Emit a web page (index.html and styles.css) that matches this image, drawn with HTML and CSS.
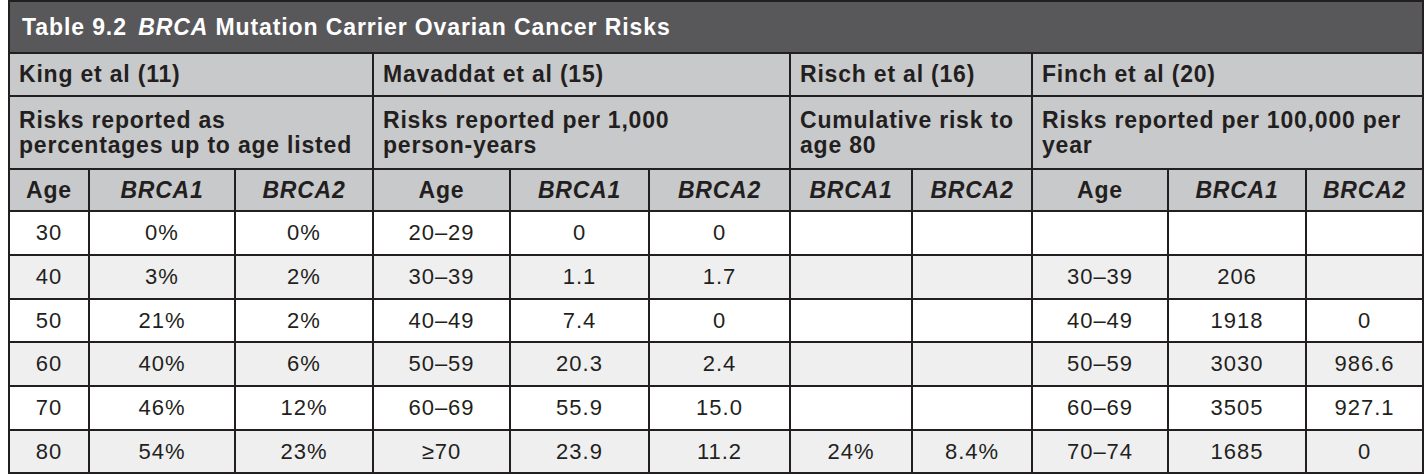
FILE: index.html
```html
<!DOCTYPE html>
<html lang="en">
<head>
<meta charset="utf-8">
<title>Table 9.2 BRCA Mutation Carrier Ovarian Cancer Risks</title>
<link rel="stylesheet" href="styles.css">
</head>
<body>
<table class="risk-table">
  <colgroup>
    <col class="c1"><col class="c2"><col class="c3">
    <col class="c4"><col class="c5"><col class="c6">
    <col class="c7"><col class="c8">
    <col class="c9"><col class="c10"><col class="c11">
  </colgroup>
  <thead>
    <tr class="title-row">
      <th colspan="11" class="title">Table 9.2 <em class="title-gene">BRCA</em> Mutation Carrier Ovarian Cancer Risks</th>
    </tr>
    <tr class="study-row">
      <th colspan="3" class="study">King et al (11)</th>
      <th colspan="3" class="study">Mavaddat et al (15)</th>
      <th colspan="2" class="study">Risch et al (16)</th>
      <th colspan="3" class="study">Finch et al (20)</th>
    </tr>
    <tr class="desc-row">
      <th colspan="3" class="desc">Risks reported as<br>percentages up to age listed</th>
      <th colspan="3" class="desc">Risks reported per 1,000<br>person-years</th>
      <th colspan="2" class="desc">Cumulative risk to<br>age 80</th>
      <th colspan="3" class="desc">Risks reported per 100,000 per<br>year</th>
    </tr>
    <tr class="col-row">
      <th>Age</th><th><em>BRCA1</em></th><th><em>BRCA2</em></th>
      <th>Age</th><th><em>BRCA1</em></th><th><em>BRCA2</em></th>
      <th><em>BRCA1</em></th><th><em>BRCA2</em></th>
      <th>Age</th><th><em>BRCA1</em></th><th><em>BRCA2</em></th>
    </tr>
  </thead>
  <tbody>
    <tr class="r-a">
      <td>30</td><td>0%</td><td>0%</td>
      <td>20–29</td><td>0</td><td>0</td>
      <td></td><td></td>
      <td></td><td></td><td></td>
    </tr>
    <tr class="r-b">
      <td>40</td><td>3%</td><td>2%</td>
      <td>30–39</td><td>1.1</td><td>1.7</td>
      <td></td><td></td>
      <td>30–39</td><td>206</td><td></td>
    </tr>
    <tr class="r-a r-short">
      <td>50</td><td>21%</td><td>2%</td>
      <td>40–49</td><td>7.4</td><td>0</td>
      <td></td><td></td>
      <td>40–49</td><td>1918</td><td>0</td>
    </tr>
    <tr class="r-b">
      <td>60</td><td>40%</td><td>6%</td>
      <td>50–59</td><td>20.3</td><td>2.4</td>
      <td></td><td></td>
      <td>50–59</td><td>3030</td><td>986.6</td>
    </tr>
    <tr class="r-a">
      <td>70</td><td>46%</td><td>12%</td>
      <td>60–69</td><td>55.9</td><td>15.0</td>
      <td></td><td></td>
      <td>60–69</td><td>3505</td><td>927.1</td>
    </tr>
    <tr class="r-b r-short">
      <td>80</td><td>54%</td><td>23%</td>
      <td>≥70</td><td>23.9</td><td>11.2</td>
      <td>24%</td><td>8.4%</td>
      <td>70–74</td><td>1685</td><td>0</td>
    </tr>
  </tbody>
</table>
</body>
</html>
```

FILE: styles.css
```css
html, body {
  background: #ffffff;
}
body {
  margin: 0 0 0 8px;
  font-family: "Liberation Sans", Arial, Helvetica, sans-serif;
  color: #231f20;
}

.risk-table {
  box-sizing: border-box;
  width: 1416px;
  table-layout: fixed;
  border-collapse: separate;
  border-spacing: 0;
  border-top: 2px solid #231f20;
  border-left: 2px solid #231f20;
}

.c1 { width: 80px; }
.c2 { width: 146px; }
.c3 { width: 138px; }
.c4 { width: 137px; }
.c5 { width: 139px; }
.c6 { width: 141px; }
.c7 { width: 122px; }
.c8 { width: 120px; }
.c9 { width: 136px; }
.c10 { width: 138px; }
.c11 { width: 117px; }

.risk-table th,
.risk-table td {
  box-sizing: border-box;
  border-right: 2px solid #231f20;
  border-bottom: 2px solid #231f20;
  padding: 0 9px;
  vertical-align: middle;
  white-space: nowrap;
}

.risk-table em {
  font-style: italic;
}

.title-row th {
  background: #58585a;
  color: #ffffff;
  font-size: 23px;
  letter-spacing: 0.9px;
  font-weight: 700;
  text-align: left;
  height: 52px;
  padding-left: 12px;
}

.title-gene {
  margin-left: 4px;
}

.study-row th,
.desc-row th,
.col-row th {
  background: #c8c9cb;
  font-size: 23px;
  letter-spacing: 0.8px;
  font-weight: 700;
  color: #231f20;
}

.study-row th {
  text-align: left;
  height: 43px;
}

.desc-row th {
  text-align: left;
  line-height: 25px;
  height: 73px;
}

.col-row th {
  text-align: center;
  height: 42px;
}

.risk-table td {
  font-size: 22px;
  letter-spacing: 1px;
  text-align: center;
  height: 44px;
}

.r-short td {
  height: 43px;
}

.r-a td {
  background: #ffffff;
}

.r-b td {
  background: #efeff0;
}
```
